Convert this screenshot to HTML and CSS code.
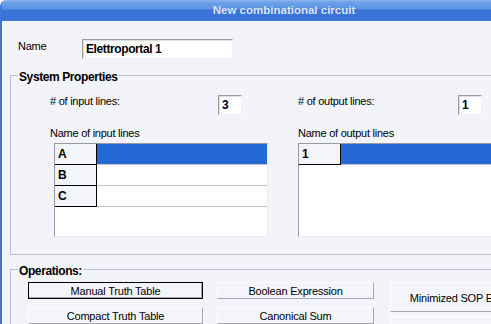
FILE: index.html
```html
<!DOCTYPE html>
<html>
<head>
<meta charset="utf-8">
<link rel="stylesheet" href="styles.css">
</head>
<body>
<div class="window">
  <div class="titlebar"><span class="title">New combinational circuit</span></div>
  <div class="client">
    <div class="name-row">
      <span class="lbl name-lbl">Name</span>
      <div class="field name-field">Elettroportal 1</div>
    </div>

    <fieldset class="group sys">
      <legend>System Properties</legend>
      <div class="sys-body">
        <div class="col col-in">
          <div class="count-row"><span class="lbl count-lbl">
# of input lines:</span><div class="field num">3</div></div>
          <div class="lbl list-lbl">Name of input lines</div>
          <div class="grid grid-in">
            <div class="row sel"><div class="hdr">A</div><div class="cell"></div></div>
            <div class="row"><div class="hdr">B</div><div class="cell"></div></div>
            <div class="row"><div class="hdr">C</div><div class="cell"></div></div>
          </div>
        </div>
        <div class="col col-out">
          <div class="count-row"><span class="lbl count-lbl">
# of output lines:</span><div class="field num">1</div></div>
          <div class="lbl list-lbl">Name of output lines</div>
          <div class="grid grid-out">
            <div class="row sel"><div class="hdr">1</div><div class="cell"></div></div>
          </div>
        </div>
      </div>
    </fieldset>

    <fieldset class="group ops">
      <legend>Operations:</legend>
      <div class="ops-body">
        <div class="btn-col c1">
          <button class="btn default">Manual Truth Table</button>
          <button class="btn">Compact Truth Table</button>
        </div>
        <div class="btn-col c2">
          <button class="btn">Boolean Expression</button>
          <button class="btn">Canonical Sum</button>
        </div>
        <div class="btn-col c3">
          <button class="btn tall">Minimized SOP Expression</button>
          <button class="btn tall">Minimized POS Expression</button>
        </div>
      </div>
    </fieldset>
  </div>
</div>
</body>
</html>
```
FILE: styles.css
```css
* { box-sizing: border-box; }
html, body {
  margin: 0;
  height: 100%;
  overflow: hidden;
  background: #eef1f8;
}
body {
  font-family: "Liberation Sans", Arial, sans-serif;
  font-size: 11px;
  color: #000;
}
.window {
  width: 566px;
  height: 360px;
  border-left: 2px solid #3f76d9;
  border-top-left-radius: 7px;
  overflow: hidden;
  background: #f3f4f9;
}
.titlebar {
  height: 21px;
  background: linear-gradient(#8ab4ee 0, #6a9ee8 3px, #5b93e4 9px, #3c75d8 10px, #3a73d7 18px, #3e77da 21px);
  text-align: center;
  line-height: 21px;
}
.title {
  font-weight: bold;
  font-size: 11.5px;
  color: #dbe6f7;
  text-shadow: 0 0 1px rgba(40, 80, 170, 0.4);
}
.client {
  padding-left: 8px;
}
.lbl {
  line-height: 13px;
  letter-spacing: -0.25px;
}
.name-row {
  display: flex;
  padding: 18px 0 0 8px;
}
.name-lbl {
  width: 64px;
  padding-top: 1px;
}
.field {
  background: #fff;
  border-style: solid;
  border-width: 1px;
  border-color: #9d9daa #f0f0f4 #f0f0f4 #9d9daa;
  box-shadow: inset 1px 1px 0 #dcdce4;
  font-weight: bold;
  font-size: 12px;
  letter-spacing: -0.4px;
  line-height: 18px;
  padding-left: 3px;
}
.name-field {
  width: 151px;
  height: 20px;
}
.group {
  margin: 0;
  padding: 0;
  border: 1px solid #bdbecc;
  min-width: 0;
}
.group legend {
  font-weight: bold;
  font-size: 12px;
  letter-spacing: -0.4px;
  line-height: 14px;
  padding: 3px 1px 0 1px;
  margin-left: 7px;
}
.sys {
  margin-top: 8px;
}
.sys-body {
  display: flex;
  padding: 11px 0 17px 39px;
}
.col-in { width: 248px; }
.col-out { flex: 1; }
.count-row {
  display: flex;
  height: 20px;
}
.col-in .count-lbl { width: 168px; }
.col-out .count-lbl { width: 160px; }
.num {
  width: 24px;
  height: 20px;
}
.list-lbl {
  margin-top: 12px;
}
.grid {
  margin-top: 3px;
  height: 94px;
  background: #fff;
  border-style: solid;
  border-width: 1px;
  border-color: #9898a8 #eeeef2 #eeeef2 #9898a8;
}
.grid-in {
  margin-left: 4px;
  width: 214px;
}
.grid-out {
  width: 240px;
}
.row {
  display: flex;
  height: 21px;
}
.hdr {
  width: 42px;
  background: #f4f5fa;
  border-right: 1px solid #000;
  border-bottom: 1px solid #000;
  font-weight: bold;
  font-size: 12px;
  line-height: 20px;
  padding-left: 3px;
}
.cell {
  flex: 1;
  border-bottom: 1px solid #c3c3c8;
}
.row.sel .cell {
  background: #2468d6;
  border-bottom-color: #c3c3c8;
}
.ops {
  margin-top: 6px;
}
.ops-body {
  display: flex;
  padding: 4px 0 0 17px;
}
.btn-col {
  display: flex;
  flex-direction: column;
  gap: 8px;
}
.c3 .btn + .btn { margin-top: -4px; }
.c1 { width: 175px; margin-right: 14px; }
.c2 { width: 157px; margin-right: 16px; }
.c3 { width: 168px; }
.btn {
  font-family: "Liberation Sans", Arial, sans-serif;
  font-size: 11px;
  letter-spacing: -0.2px;
  color: #000;
  height: 17px;
  padding: 1px 0 0 0;
  margin: 0;
  background: #f4f5fa;
  border-style: solid;
  border-width: 1px;
  border-color: #ffffff #a7a7b4 #a7a7b4 #ffffff;
  line-height: 14px;
}
.btn.default {
  border-color: #000;
  box-shadow: inset -1px -1px 0 #a7a7b4;
}
.btn.tall {
  height: 30px;
  padding-top: 2px;
}
```
